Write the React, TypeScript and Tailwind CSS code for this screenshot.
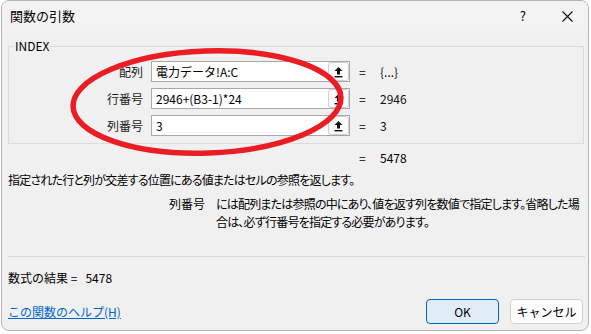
import React from "react";

const font = { fontFamily: '"Noto Sans CJK JP", "Noto Sans", sans-serif' };

function RefButton() {
  return (
    <div className="flex h-[19px] w-[21px] items-center justify-center rounded-[3px] border border-[#d0d0d0] bg-[#fbfbfb]">
      <svg width="11" height="12" viewBox="0 0 11 12">
        <path d="M5.5 1 L9.5 5 L7 5 L7 8.5 L4 8.5 L4 5 L1.5 5 Z" fill="#111" />
        <rect x="1.5" y="10" width="8" height="1.4" fill="#111" />
      </svg>
    </div>
  );
}

function Row({ label, value, result }: { label: string; value: string; result: string }) {
  return (
    <div className="flex h-[21px] items-center">
      <div className="w-[134px] pr-0 text-right text-[12px] text-[#1b1b1b]">{label}</div>
      <div className="ml-[8px] flex h-[21px] w-[199px] items-center justify-between border border-[#a8a8a8] bg-white">
        <span className="pl-[4px] text-[12px] text-black">{value}</span>
        <RefButton />
      </div>
      <span className="ml-[9px] w-[10px] text-[12px] text-black">=</span>
      <span className="ml-[11px] text-[12px] text-[#111]">{result}</span>
    </div>
  );
}

export default function App() {
  return (
    <div className="h-[334px] w-[591px] bg-white" style={font}>
      <div className="relative ml-[1px] flex h-[331px] w-[588px] flex-col overflow-hidden rounded-[8px] border border-[#b4b4b4] bg-[#f0f0f0] leading-[16px]">
        {/* title bar */}
        <div className="flex h-[30px] shrink-0 items-center bg-[#f3f3f3]">
          <span className="ml-[8px] text-[13px] text-black">関数の引数</span>
          <span className="ml-auto mr-[36px] text-[13px] text-black">?</span>
          <svg className="mr-[15px]" width="11" height="11" viewBox="0 0 11 11">
            <path d="M0.5 0.5 L10.5 10.5 M10.5 0.5 L0.5 10.5" stroke="#111" strokeWidth="1.1" />
          </svg>
        </div>

        {/* group box */}
        <fieldset className="ml-[6px] mt-[8px] h-[105px] w-[576px] shrink-0 border border-[#dcdcdc] px-0 pb-0">
          <legend className="ml-[5px] px-[1px] text-[12px] leading-[14px] text-black">INDEX</legend>
          <div className="mt-[8px] flex flex-col gap-[6px]">
            <Row label="配列" value="電力データ!A:C" result="{...}" />
            <Row label="行番号" value="2946+(B3-1)*24" result="2946" />
            <Row label="列番号" value="3" result="3" />
          </div>
        </fieldset>

        <div className="mt-[6px] flex h-[16px] shrink-0 items-center text-[12px]">
          <span className="ml-[357px] w-[10px]">=</span>
          <span className="ml-[11px]">5478</span>
        </div>

        <div className="ml-[6px] mt-[6px] shrink-0 whitespace-nowrap text-[12px] text-black [font-feature-settings:'palt'] tracking-[-0.8px]">
          指定された行と列が交差する位置にある値またはセルの参照を返します。
        </div>

        <div className="mt-[7px] flex shrink-0 text-[12px] text-black">
          <div className="w-[203px] text-right leading-[18px]">列番号</div>
          <div className="ml-[11px] w-[370px] whitespace-nowrap leading-[18px] [font-feature-settings:'palt'] tracking-[-0.8px]">
            には配列または参照の中にあり、値を返す列を数値で指定します。省略した場
            <br />
            合は、必ず行番号を指定する必要があります。
          </div>
        </div>

        <div className="ml-[6px] mt-[25px] h-px w-[577px] shrink-0 bg-[#d9d9d9]" />

        <div className="ml-[6px] mt-[13px] shrink-0 text-[12px] text-black">
          数式の結果 =&nbsp;&nbsp;&nbsp;5478
        </div>

        <div className="mt-[13px] flex shrink-0 items-start">
          <a className="ml-[6px] mt-[5px] text-[12px] text-[#0066cc] underline decoration-[#0066cc]">
            この関数のヘルプ(H)
          </a>
          <button className="ml-auto h-[25px] w-[73px] rounded-[4px] border border-[#0067c0] bg-[#e0ecf8] text-[12px] text-black">
            OK
          </button>
          <button className="ml-[11px] mr-[5px] h-[25px] w-[73px] rounded-[4px] border border-[#cfcfcf] bg-[#fdfdfd] text-[12px] text-black">
            キャンセル
          </button>
        </div>

        {/* red hand-drawn annotation */}
        <svg className="pointer-events-none absolute left-0 top-0" width="588" height="332">
          <ellipse cx="205" cy="101" rx="134" ry="51" fill="none" stroke="#ea1d25" strokeWidth="5.5" transform="rotate(-2 205 101)" />
        </svg>
      </div>
    </div>
  );
}
